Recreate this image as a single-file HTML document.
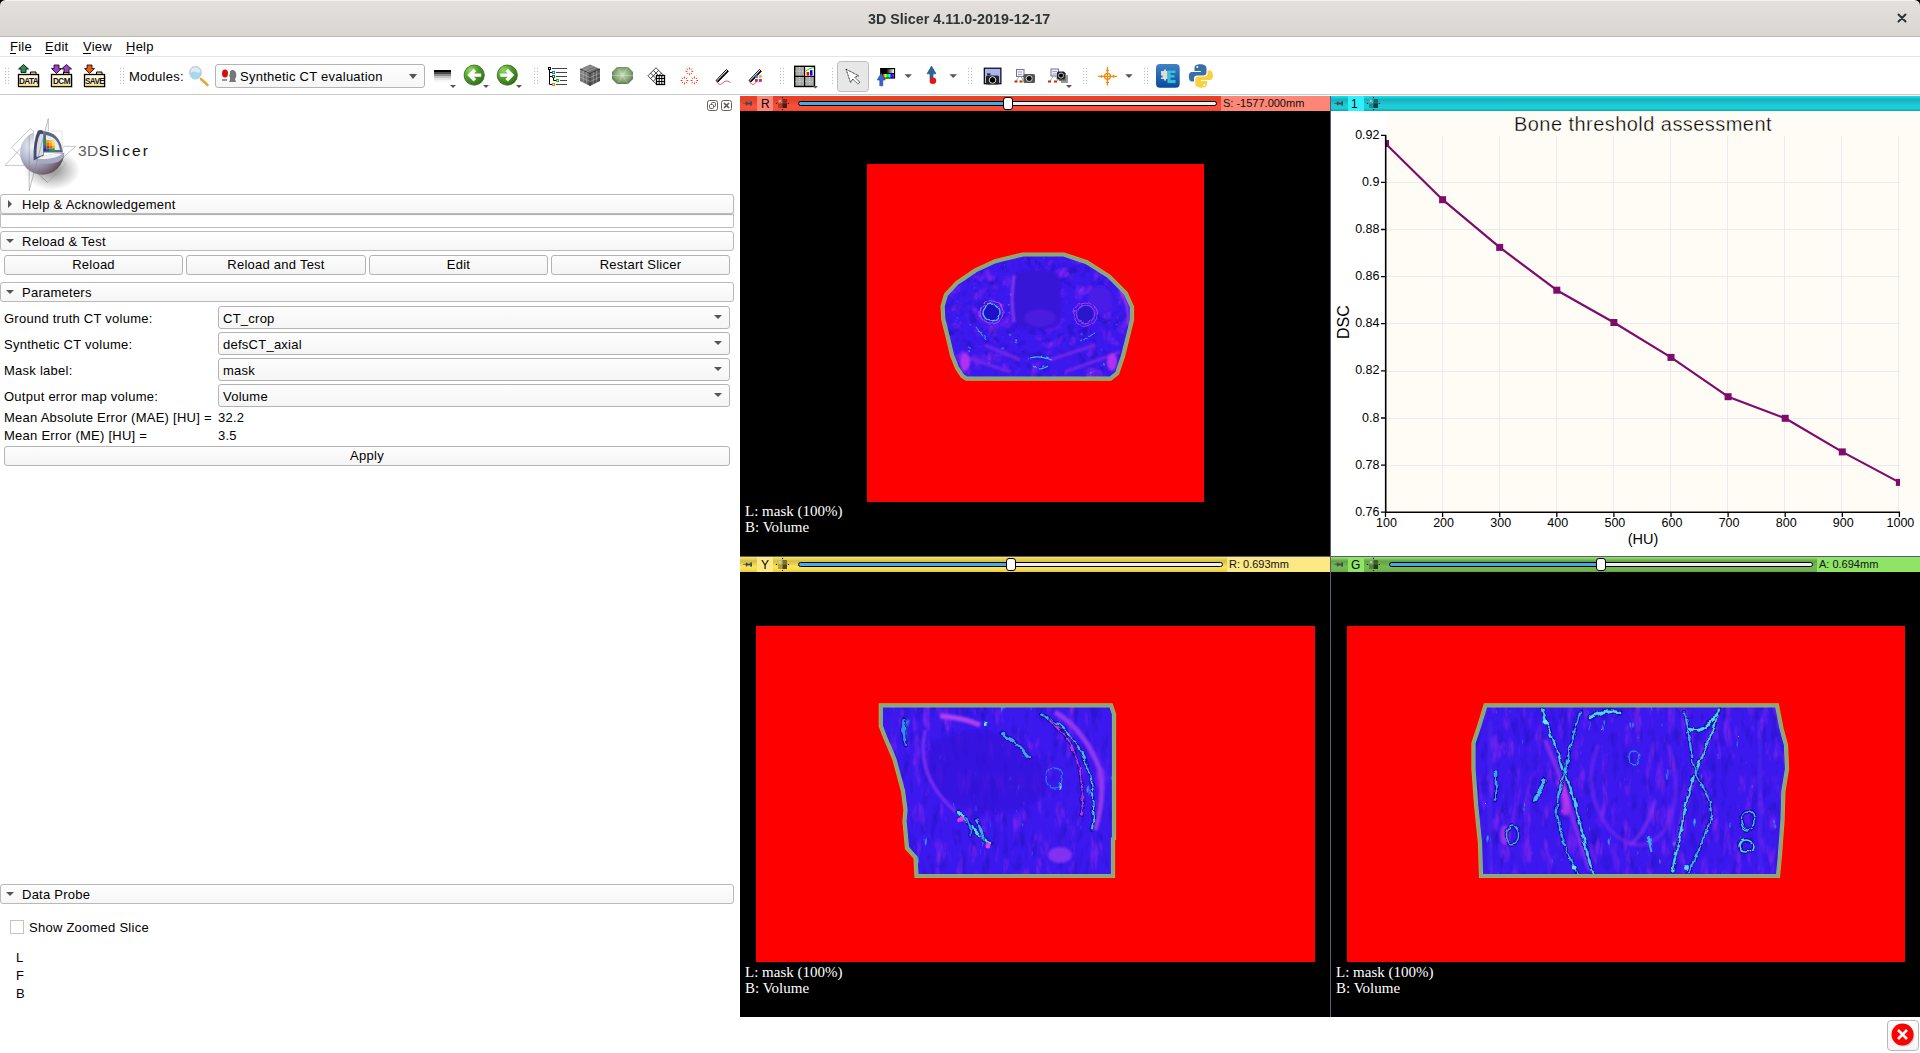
<!DOCTYPE html>
<html><head><meta charset="utf-8">
<style>
*{box-sizing:border-box;margin:0;padding:0}
html,body{width:1920px;height:1053px;overflow:hidden;background:#fff;font-family:"Liberation Sans",sans-serif;color:#000}
.a{position:absolute}
.t{position:absolute;white-space:pre;font-size:13px;letter-spacing:0.25px;line-height:15px}
#title{left:0;top:0;width:1920px;height:37px;background:linear-gradient(#e3e0dd,#d9d6d2);border-top:1px solid #f4f3f2;border-bottom:1px solid #bfb8b2}
.hdr{position:absolute;left:0;width:734px;height:20px;border:1px solid #b9b9b9;border-radius:3px;background:linear-gradient(#fefefe,#f6f6f6)}
.btn{position:absolute;height:20px;border:1px solid #b4b4b4;border-radius:3px;background:linear-gradient(#fdfdfd,#f4f4f4);text-align:center;font-size:13px;letter-spacing:0.25px;line-height:17px}
.combo{position:absolute;left:218px;width:512px;height:23px;border:1px solid #b4b4b4;border-radius:3px;background:linear-gradient(#fdfdfd,#f5f5f5)}
.tri{position:absolute;width:0;height:0;border-left:4px solid transparent;border-right:4px solid transparent;border-top:4px solid #555}
.grip{position:absolute;width:5px;height:17px;background-image:radial-gradient(circle,#c8c8c8 0.8px,transparent 1px);background-size:3px 3px}
.vtxt{position:absolute;white-space:pre;font-family:"Liberation Serif",serif;font-size:15px;color:#fff;line-height:16px}
</style></head><body>
<!-- TITLE BAR -->
<div id="title" class="a"></div>
<div class="t" style="left:868px;top:10px;font-size:15.5px;font-weight:700;letter-spacing:0;color:#2e3436;line-height:18px;transform:scaleX(0.924);transform-origin:0 0">3D Slicer 4.11.0-2019-12-17</div>
<svg class="a" style="left:1896px;top:12px" width="12" height="12" viewBox="0 0 12 12"><path d="M2.5 2.5L9.5 9.5M9.5 2.5L2.5 9.5" stroke="#2e3436" stroke-width="2" stroke-linecap="round"/></svg>
<svg class="a" style="left:0;top:0" width="6" height="6"><path d="M0 0H5.5A5.5 5.5 0 0 0 0 5.5Z" fill="#000"/></svg>
<svg class="a" style="left:1914px;top:0" width="6" height="6"><path d="M6 0H0.5A5.5 5.5 0 0 1 6 5.5Z" fill="#000"/></svg>

<!-- MENU -->
<div class="t" style="left:10px;top:39px">File</div>
<div class="t" style="left:45px;top:39px">Edit</div>
<div class="t" style="left:83px;top:39px">View</div>
<div class="t" style="left:126px;top:39px">Help</div>
<div class="a" style="left:10px;top:53px;width:6px;height:1px;background:#000"></div>
<div class="a" style="left:45px;top:53px;width:7px;height:1px;background:#000"></div>
<div class="a" style="left:83px;top:53px;width:8px;height:1px;background:#000"></div>
<div class="a" style="left:126px;top:53px;width:8px;height:1px;background:#000"></div>
<div class="a" style="left:0;top:56px;width:1920px;height:1px;background:#e4e4e4"></div>

<!-- TOOLBAR placeholder -->
<div id="toolbar">
<svg class="a" style="left:0;top:57px" width="1220" height="37" viewBox="0 57 1220 37">
<defs>
 <pattern id="gp" x="0" y="0" width="3" height="3" patternUnits="userSpaceOnUse"><circle cx="1" cy="1" r="0.75" fill="#b8b8b8"/></pattern>
 <linearGradient id="wl" x1="0" y1="0" x2="0" y2="1"><stop offset="0" stop-color="#000"/><stop offset="0.15" stop-color="#000"/><stop offset="0.2" stop-color="#555"/><stop offset="0.4" stop-color="#888"/><stop offset="0.6" stop-color="#ccc"/><stop offset="0.8" stop-color="#eee"/><stop offset="1" stop-color="#fafafa"/></linearGradient>
 <radialGradient id="gb" cx="0.3" cy="0.25" r="0.85"><stop offset="0" stop-color="#8fd85a"/><stop offset="0.5" stop-color="#4d9a2a"/><stop offset="1" stop-color="#2e6a16"/></radialGradient>
 <radialGradient id="oct" cx="0.5" cy="0.45" r="0.6"><stop offset="0" stop-color="#c8dcb8"/><stop offset="0.6" stop-color="#8aa878"/><stop offset="1" stop-color="#52704a"/></radialGradient>
 <linearGradient id="cube" x1="0" y1="0" x2="1" y2="1"><stop offset="0" stop-color="#9a9a9a"/><stop offset="1" stop-color="#3a3a3a"/></linearGradient>
 <linearGradient id="ext" x1="0" y1="0" x2="0" y2="1"><stop offset="0" stop-color="#3f82c6"/><stop offset="1" stop-color="#064b9e"/></linearGradient>
 <linearGradient id="rb" x1="0" y1="0" x2="1" y2="0"><stop offset="0" stop-color="#f00"/><stop offset="0.2" stop-color="#ff0"/><stop offset="0.4" stop-color="#0f0"/><stop offset="0.6" stop-color="#0ff"/><stop offset="0.8" stop-color="#00f"/><stop offset="1" stop-color="#f0f"/></linearGradient>
 <linearGradient id="gw" x1="0" y1="0" x2="1" y2="0"><stop offset="0" stop-color="#000"/><stop offset="0.3" stop-color="#000"/><stop offset="1" stop-color="#fff"/></linearGradient>
</defs>
<!-- grips -->
<rect x="5.0" y="67.8" width="1.1" height="1.1" fill="#bdbdbd"/><rect x="5.0" y="70.8" width="1.1" height="1.1" fill="#bdbdbd"/><rect x="5.0" y="73.8" width="1.1" height="1.1" fill="#bdbdbd"/><rect x="5.0" y="76.8" width="1.1" height="1.1" fill="#bdbdbd"/><rect x="5.0" y="79.8" width="1.1" height="1.1" fill="#bdbdbd"/><rect x="5.0" y="82.8" width="1.1" height="1.1" fill="#bdbdbd"/><rect x="8.0" y="67.8" width="1.1" height="1.1" fill="#bdbdbd"/><rect x="8.0" y="70.8" width="1.1" height="1.1" fill="#bdbdbd"/><rect x="8.0" y="73.8" width="1.1" height="1.1" fill="#bdbdbd"/><rect x="8.0" y="76.8" width="1.1" height="1.1" fill="#bdbdbd"/><rect x="8.0" y="79.8" width="1.1" height="1.1" fill="#bdbdbd"/><rect x="8.0" y="82.8" width="1.1" height="1.1" fill="#bdbdbd"/>
<rect x="120.0" y="67.8" width="1.1" height="1.1" fill="#bdbdbd"/><rect x="120.0" y="70.8" width="1.1" height="1.1" fill="#bdbdbd"/><rect x="120.0" y="73.8" width="1.1" height="1.1" fill="#bdbdbd"/><rect x="120.0" y="76.8" width="1.1" height="1.1" fill="#bdbdbd"/><rect x="120.0" y="79.8" width="1.1" height="1.1" fill="#bdbdbd"/><rect x="120.0" y="82.8" width="1.1" height="1.1" fill="#bdbdbd"/><rect x="123.0" y="67.8" width="1.1" height="1.1" fill="#bdbdbd"/><rect x="123.0" y="70.8" width="1.1" height="1.1" fill="#bdbdbd"/><rect x="123.0" y="73.8" width="1.1" height="1.1" fill="#bdbdbd"/><rect x="123.0" y="76.8" width="1.1" height="1.1" fill="#bdbdbd"/><rect x="123.0" y="79.8" width="1.1" height="1.1" fill="#bdbdbd"/><rect x="123.0" y="82.8" width="1.1" height="1.1" fill="#bdbdbd"/>
<rect x="534.0" y="67.8" width="1.1" height="1.1" fill="#bdbdbd"/><rect x="534.0" y="70.8" width="1.1" height="1.1" fill="#bdbdbd"/><rect x="534.0" y="73.8" width="1.1" height="1.1" fill="#bdbdbd"/><rect x="534.0" y="76.8" width="1.1" height="1.1" fill="#bdbdbd"/><rect x="534.0" y="79.8" width="1.1" height="1.1" fill="#bdbdbd"/><rect x="534.0" y="82.8" width="1.1" height="1.1" fill="#bdbdbd"/><rect x="537.0" y="67.8" width="1.1" height="1.1" fill="#bdbdbd"/><rect x="537.0" y="70.8" width="1.1" height="1.1" fill="#bdbdbd"/><rect x="537.0" y="73.8" width="1.1" height="1.1" fill="#bdbdbd"/><rect x="537.0" y="76.8" width="1.1" height="1.1" fill="#bdbdbd"/><rect x="537.0" y="79.8" width="1.1" height="1.1" fill="#bdbdbd"/><rect x="537.0" y="82.8" width="1.1" height="1.1" fill="#bdbdbd"/>
<rect x="780.0" y="67.8" width="1.1" height="1.1" fill="#bdbdbd"/><rect x="780.0" y="70.8" width="1.1" height="1.1" fill="#bdbdbd"/><rect x="780.0" y="73.8" width="1.1" height="1.1" fill="#bdbdbd"/><rect x="780.0" y="76.8" width="1.1" height="1.1" fill="#bdbdbd"/><rect x="780.0" y="79.8" width="1.1" height="1.1" fill="#bdbdbd"/><rect x="780.0" y="82.8" width="1.1" height="1.1" fill="#bdbdbd"/><rect x="783.0" y="67.8" width="1.1" height="1.1" fill="#bdbdbd"/><rect x="783.0" y="70.8" width="1.1" height="1.1" fill="#bdbdbd"/><rect x="783.0" y="73.8" width="1.1" height="1.1" fill="#bdbdbd"/><rect x="783.0" y="76.8" width="1.1" height="1.1" fill="#bdbdbd"/><rect x="783.0" y="79.8" width="1.1" height="1.1" fill="#bdbdbd"/><rect x="783.0" y="82.8" width="1.1" height="1.1" fill="#bdbdbd"/>
<rect x="832.0" y="67.8" width="1.1" height="1.1" fill="#bdbdbd"/><rect x="832.0" y="70.8" width="1.1" height="1.1" fill="#bdbdbd"/><rect x="832.0" y="73.8" width="1.1" height="1.1" fill="#bdbdbd"/><rect x="832.0" y="76.8" width="1.1" height="1.1" fill="#bdbdbd"/><rect x="832.0" y="79.8" width="1.1" height="1.1" fill="#bdbdbd"/><rect x="832.0" y="82.8" width="1.1" height="1.1" fill="#bdbdbd"/>
<rect x="968.0" y="67.8" width="1.1" height="1.1" fill="#bdbdbd"/><rect x="968.0" y="70.8" width="1.1" height="1.1" fill="#bdbdbd"/><rect x="968.0" y="73.8" width="1.1" height="1.1" fill="#bdbdbd"/><rect x="968.0" y="76.8" width="1.1" height="1.1" fill="#bdbdbd"/><rect x="968.0" y="79.8" width="1.1" height="1.1" fill="#bdbdbd"/><rect x="968.0" y="82.8" width="1.1" height="1.1" fill="#bdbdbd"/><rect x="971.0" y="67.8" width="1.1" height="1.1" fill="#bdbdbd"/><rect x="971.0" y="70.8" width="1.1" height="1.1" fill="#bdbdbd"/><rect x="971.0" y="73.8" width="1.1" height="1.1" fill="#bdbdbd"/><rect x="971.0" y="76.8" width="1.1" height="1.1" fill="#bdbdbd"/><rect x="971.0" y="79.8" width="1.1" height="1.1" fill="#bdbdbd"/><rect x="971.0" y="82.8" width="1.1" height="1.1" fill="#bdbdbd"/>
<rect x="1083.0" y="67.8" width="1.1" height="1.1" fill="#bdbdbd"/><rect x="1083.0" y="70.8" width="1.1" height="1.1" fill="#bdbdbd"/><rect x="1083.0" y="73.8" width="1.1" height="1.1" fill="#bdbdbd"/><rect x="1083.0" y="76.8" width="1.1" height="1.1" fill="#bdbdbd"/><rect x="1083.0" y="79.8" width="1.1" height="1.1" fill="#bdbdbd"/><rect x="1083.0" y="82.8" width="1.1" height="1.1" fill="#bdbdbd"/><rect x="1086.0" y="67.8" width="1.1" height="1.1" fill="#bdbdbd"/><rect x="1086.0" y="70.8" width="1.1" height="1.1" fill="#bdbdbd"/><rect x="1086.0" y="73.8" width="1.1" height="1.1" fill="#bdbdbd"/><rect x="1086.0" y="76.8" width="1.1" height="1.1" fill="#bdbdbd"/><rect x="1086.0" y="79.8" width="1.1" height="1.1" fill="#bdbdbd"/><rect x="1086.0" y="82.8" width="1.1" height="1.1" fill="#bdbdbd"/>
<rect x="1144.0" y="67.8" width="1.1" height="1.1" fill="#bdbdbd"/><rect x="1144.0" y="70.8" width="1.1" height="1.1" fill="#bdbdbd"/><rect x="1144.0" y="73.8" width="1.1" height="1.1" fill="#bdbdbd"/><rect x="1144.0" y="76.8" width="1.1" height="1.1" fill="#bdbdbd"/><rect x="1144.0" y="79.8" width="1.1" height="1.1" fill="#bdbdbd"/><rect x="1144.0" y="82.8" width="1.1" height="1.1" fill="#bdbdbd"/><rect x="1147.0" y="67.8" width="1.1" height="1.1" fill="#bdbdbd"/><rect x="1147.0" y="70.8" width="1.1" height="1.1" fill="#bdbdbd"/><rect x="1147.0" y="73.8" width="1.1" height="1.1" fill="#bdbdbd"/><rect x="1147.0" y="76.8" width="1.1" height="1.1" fill="#bdbdbd"/><rect x="1147.0" y="79.8" width="1.1" height="1.1" fill="#bdbdbd"/><rect x="1147.0" y="82.8" width="1.1" height="1.1" fill="#bdbdbd"/>

<!-- DATA -->
<g>
 <rect x="19" y="75" width="20" height="12" fill="#888" opacity="0.35" transform="translate(0.8 0.8)"/>
 <path d="M30.5 74.5V72H36V74.5" fill="#f3dc88" stroke="#000" stroke-width="1"/>
 <rect x="18.5" y="74.5" width="20" height="12" fill="#fff6d6" stroke="#000" stroke-width="1.3"/>
 <rect x="19.2" y="84.5" width="18.6" height="1.6" fill="#f0d670"/>
 <text x="28.5" y="84" font-family="Liberation Sans" font-weight="700" font-size="8.2" text-anchor="middle" letter-spacing="-0.6" fill="#111">DATA</text>
 <path d="M23.5 64.5L28.5 69H26V72.5H21V69H18.5Z" fill="#2f8a4c" stroke="#000" stroke-width="0.8"/>
</g>
<!-- DCM -->
<g>
 <rect x="52" y="75" width="20" height="12" fill="#888" opacity="0.35" transform="translate(0.8 0.8)"/>
 <path d="M63.5 74.5V72H69V74.5" fill="#f3dc88" stroke="#000" stroke-width="1"/>
 <rect x="51.5" y="74.5" width="20" height="12" fill="#fff6d6" stroke="#000" stroke-width="1.3"/>
 <rect x="52.2" y="84.5" width="18.6" height="1.6" fill="#f0d670"/>
 <text x="61.5" y="84" font-family="Liberation Sans" font-weight="700" font-size="8.2" text-anchor="middle" letter-spacing="-0.5" fill="#111">DCM</text>
 <path d="M56.5 73.5L61.5 68.5H59V65H54V68.5H51.5Z" fill="#a040c8" stroke="#000" stroke-width="0.8"/>
 <path d="M66.5 64.5L71.5 69H69V72.5H64V69H61.5Z" fill="#a040c8" stroke="#000" stroke-width="0.8"/>
</g>
<!-- SAVE -->
<g>
 <rect x="85" y="75" width="20" height="12" fill="#888" opacity="0.35" transform="translate(0.8 0.8)"/>
 <path d="M96.5 74.5V72H102V74.5" fill="#f3dc88" stroke="#000" stroke-width="1"/>
 <rect x="84.5" y="74.5" width="20" height="12" fill="#fff6d6" stroke="#000" stroke-width="1.3"/>
 <rect x="85.2" y="84.5" width="18.6" height="1.6" fill="#f0d670"/>
 <text x="94.5" y="84" font-family="Liberation Sans" font-weight="700" font-size="8.2" text-anchor="middle" letter-spacing="-0.7" fill="#111">SAVE</text>
 <path d="M89.5 73.5L94.5 68.5H92V65H87V68.5H84.5Z" fill="#f05a10" stroke="#000" stroke-width="0.8"/>
</g>
<!-- magnifier -->
<path d="M201 79L207.5 85" stroke="#e8a838" stroke-width="2.6" stroke-linecap="round"/>
<circle cx="195.5" cy="72.5" r="5.8" fill="#d8eff8" stroke="#c8c8c8" stroke-width="1.3"/>
<path d="M190.2 73 Q193 70.5 196 72 Q199 73.5 201 71.5 V74 A5.5 5.5 0 0 1 190 74Z" fill="#a8d8ea"/>
<!-- combo -->
<!-- W/L -->
<rect x="434" y="70" width="17" height="2" fill="#000"/><rect x="434" y="72" width="17" height="2" fill="#4a4a4a"/><rect x="434" y="74" width="17" height="2" fill="#8c8c8c"/><rect x="434" y="76" width="17" height="2" fill="#c4c4c4"/><rect x="434" y="78" width="17" height="2" fill="#e6e6e6"/><rect x="434" y="80" width="17" height="2" fill="#f6f6f6"/>
<path d="M450 85H456L453 88Z" fill="#555"/>
<!-- back / fwd -->
<circle cx="474.2" cy="75.1" r="10.1" fill="url(#gb)" stroke="#2d6a18" stroke-width="0.8"/>
<path d="M467.3 75.1L473.6 68.6L476.2 71.2L473.8 73.4H481.2V76.8H473.8L476.2 79L473.6 81.6Z" fill="#fff"/>
<path d="M483 85H489L486 88Z" fill="#555"/>
<circle cx="507.3" cy="75.1" r="10.1" fill="url(#gb)" stroke="#2d6a18" stroke-width="0.8"/>
<path d="M514.2 75.1L507.9 68.6L505.3 71.2L507.7 73.4H500.3V76.8H507.7L505.3 79L507.9 81.6Z" fill="#fff"/>
<path d="M516 85H522L519 88Z" fill="#555"/>
<!-- data tree -->
<g fill="none">
 <path d="M549.5 70V84.5H552M549.5 72.5H552M549.5 76.5H552M553.5 78V80.5H556" stroke="#000" stroke-width="1"/>
 <path d="M552 68.5H567M556 72.5H567M556 76.5H567M560 80.5H567M556 84.5H567" stroke="#444" stroke-width="1"/>
 <rect x="548.5" y="67.5" width="2" height="2" stroke="#000" stroke-width="1"/>
 <rect x="552.5" y="71.5" width="2" height="2" stroke="#1a6ee8" stroke-width="1"/>
 <rect x="552.5" y="75.5" width="2" height="2" stroke="#0a7a10" stroke-width="1"/>
 <rect x="556.5" y="79.5" width="2" height="2" stroke="#10c020" stroke-width="1"/>
 <rect x="552.5" y="83.5" width="2" height="2" stroke="#f07a10" stroke-width="1"/>
</g>
<!-- cube -->
<path d="M590 64.5L600 69V81L590 86L580 81V69Z" fill="url(#cube)"/>
<path d="M580 69L590 73.5L600 69M590 73.5V86" stroke="#2a2a2a" stroke-width="0.8" fill="none"/>
<path d="M583.3 70.5L593.3 66M586.6 72L596.6 67.5M580 73L590 77.5L600 73M580 77L590 81.5L600 77M583.3 71V83M586.6 72V84.5M593.3 72V84.5M596.6 70.5V83" stroke="#d0d0d0" stroke-width="0.6" fill="none" opacity="0.7"/>
<!-- octagon -->
<path d="M617 67H628L633 72V79L628 84H617L612 79V72Z" fill="url(#oct)"/>
<path d="M617 67L628 84M628 67L617 84M612 75.5H633" stroke="#f0f8e8" stroke-width="0.6" opacity="0.5"/>
<!-- grid icon -->
<g transform="rotate(45 656 75.8)" stroke="#000" stroke-width="0.7" fill="none">
 <rect x="650.3" y="70.1" width="11.4" height="11.4"/>
 <path d="M654.1 70.1V81.5M657.9 70.1V81.5M650.3 73.9H661.7M650.3 77.7H661.7"/>
</g>
<rect x="656.5" y="75.5" width="8" height="9" fill="#fff" stroke="#000" stroke-width="1.3"/>
<path d="M659.2 75.5V84.5M661.8 75.5V84.5M656.5 78.5H664.5M656.5 81.5H664.5" stroke="#000" stroke-width="1"/>
<!-- red dots -->
<g stroke="#f03010" stroke-width="1" fill="none">
 <path d="M689.4 67.5V69.3M689.4 73.3V75.1M685.6 71.3H687.4M691.4 71.3H693.2M686.7 68.6L687.8 69.7M691 72.9L692.1 74M692.1 68.6L691 69.7M687.8 72.9L686.7 74"/>
 <path d="M684.5 76.7V78.5M684.5 82.5V84.3M680.7 80.5H682.5M686.5 80.5H688.3M681.8 77.8L682.9 78.9M686.1 82.1L687.2 83.2M687.2 77.8L686.1 78.9M682.9 82.1L681.8 83.2"/>
 <path d="M694.4 76.7V78.5M694.4 82.5V84.3M690.6 80.5H692.4M696.4 80.5H698.2M691.7 77.8L692.8 78.9M696 82.1L697.1 83.2M697.1 77.8L696 78.9M692.8 82.1L691.7 83.2"/>
</g>
<!-- pen -->
<path d="M716 80.5L726.5 69.5L728.3 71.3L717.8 82Z" fill="#fff" stroke="#000" stroke-width="1"/>
<path d="M717.5 81.5L727.8 71" stroke="#000" stroke-width="1.4"/>
<path d="M716.5 81.5Q718.5 85 720.5 84.5Q723 83 724.5 81.5Q727 80 730.5 82.5" stroke="#e8406a" stroke-width="0.9" fill="none"/>
<!-- pen color -->
<path d="M749 80.5L759.5 69.5L761.3 71.3L750.8 82Z" fill="#fff" stroke="#000" stroke-width="1"/>
<path d="M750.5 81.5L760.8 71" stroke="#000" stroke-width="1.4"/>
<path d="M749.5 81.5Q751.5 85 753.5 84.5Q756 83 757 81" stroke="#e8406a" stroke-width="0.9" fill="none"/>
<rect x="755" y="75" width="2.8" height="2.8" fill="#1a78e8"/><rect x="759" y="75" width="2.8" height="2.8" fill="#f8b020"/>
<rect x="755" y="79" width="2.8" height="2.8" fill="#f02020"/><rect x="759" y="79" width="2.8" height="2.8" fill="#a020e0"/>
<!-- layout -->
<rect x="794.7" y="66.3" width="19.8" height="20.2" fill="#aaa" stroke="#000" stroke-width="1.4"/>
<path d="M804.6 66.3V86.5M794.7 76.4H814.5" stroke="#000" stroke-width="1.2"/>
<rect x="805.3" y="67" width="8.5" height="8.8" fill="#fff8e0"/>
<rect x="806.6" y="72" width="2.5" height="3.6" fill="#f00"/><rect x="810" y="70.2" width="2.5" height="5.4" fill="#00f"/>
<path d="M805.6 71Q809 68.5 813.6 67.5" stroke="#10e010" stroke-width="1" fill="none"/>
<path d="M795.5 71.3H803.8M799.6 67V75.6M795.5 81.4H803.8M799.6 77V85.8M805.3 81.4H813.8M809.6 77V85.8" stroke="#fff8d0" stroke-width="0.7" stroke-dasharray="0.8 1.4"/>
<path d="M813 86L818 86L815.5 88.5Z" fill="#555"/>
<!-- pointer button -->
<rect x="837.5" y="61.5" width="31" height="30" rx="3" fill="#e7e7e7" stroke="#bdbdbd" stroke-width="1"/>
<path d="M846 69.2L858.7 75.8L854.8 77.2L859.8 82.3L857.8 84L852.8 79L850.6 82.6Z" fill="#fff" stroke="#000" stroke-width="0.9" stroke-dasharray="1 0.6"/>
<!-- colorbar -->
<rect x="880.1" y="68" width="15" height="10.6" fill="#000"/>
<rect x="883" y="69.2" width="11" height="3.9" fill="url(#gw)"/>
<rect x="883" y="74" width="11" height="3.6" fill="url(#rb)"/>
<path d="M881.3 72.9L885.3 80H882.8V85.8H879.8V80H877.3Z" fill="#3a64c8" stroke="#2040a0" stroke-width="0.6"/>
<path d="M904.5 74.2H911.9L908.2 78Z" fill="#555"/>
<!-- fiducial -->
<path d="M931.5 66.1L936 73.8H933V79H930V73.8H927Z" fill="#2a6898" stroke="#184870" stroke-width="0.6"/>
<circle cx="932.9" cy="80.7" r="3.3" fill="#e01818"/>
<path d="M949.5 74.2H957L953.2 78Z" fill="#555"/>
<!-- screen capture -->
<rect x="984.3" y="68.2" width="16.6" height="15.5" fill="#aab4f0" stroke="#000" stroke-width="1.2"/>
<rect x="986" y="75.5" width="13" height="9" rx="1.5" fill="#222"/>
<rect x="987" y="73.3" width="3.5" height="2" fill="#333"/>
<circle cx="992.5" cy="80" r="3.3" fill="#000" stroke="#ddd" stroke-width="1"/>
<!-- scene cam 1 -->
<rect x="1016.5" y="69.5" width="7.5" height="7" fill="#f0f0ff" stroke="#777" stroke-width="1"/>
<path d="M1018 72H1022M1018 74.5H1022" stroke="#6060e0" stroke-width="0.6"/>
<path d="M1019 76.5L1016 81M1021 76.5L1023.5 81" stroke="#888" stroke-width="0.7"/>
<rect x="1014.5" y="80.5" width="3" height="2" fill="#c03000"/><rect x="1019.5" y="80.5" width="3" height="2" fill="#c03000"/>
<rect x="1023.5" y="74" width="11.5" height="9" rx="1.5" fill="#555"/>
<circle cx="1029.2" cy="78.5" r="3" fill="#111" stroke="#ccc" stroke-width="1"/>
<!-- scene cam 2 -->
<rect x="1051" y="69" width="7.5" height="7" fill="#f0f0ff" stroke="#777" stroke-width="1"/>
<path d="M1052.5 71.5H1057M1052.5 74H1057" stroke="#6060e0" stroke-width="0.6"/>
<path d="M1053.5 76L1050 81M1055.5 76L1058 81" stroke="#888" stroke-width="0.7"/>
<rect x="1048" y="80.5" width="3" height="2" fill="#c03000"/><rect x="1054" y="80.5" width="3" height="2" fill="#c03000"/>
<rect x="1061" y="75" width="7" height="8" fill="#999"/>
<rect x="1059" y="73" width="7" height="8" fill="#777"/>
<rect x="1057" y="71.5" width="8" height="8" rx="1.5" fill="#222"/>
<circle cx="1061" cy="75.5" r="2.5" fill="#000" stroke="#ccc" stroke-width="0.9"/>
<path d="M1066 85H1072L1069 88Z" fill="#555"/>
<!-- crosshair -->
<g stroke="#f08a10" stroke-width="1.3" fill="none">
 <path d="M1107.5 67V85.6M1098 76.3H1117"/>
 <circle cx="1107.5" cy="76.3" r="3"/>
 <path d="M1106 70.3H1109M1106 82.3H1109M1101.5 74.8V77.8M1113.5 74.8V77.8"/>
</g>
<path d="M1125.2 74.2H1132.7L1129 78Z" fill="#555"/>
<!-- extension -->
<rect x="1156" y="64.1" width="23.7" height="23.7" rx="4" fill="url(#ext)"/>
<path d="M1161 71H1164V69.5H1166V71H1168V79H1166V80.5H1164V79H1161V77.5H1162.5V75.5H1161Z" fill="#dcdcdc"/>
<path d="M1167.5 70.5H1175.5V73H1170.5V75H1174.5V77.5H1170.5V80H1175.5V83H1167.5Z" fill="#3cc0d8" stroke="#2a9ab8" stroke-width="0.4"/>
<!-- python -->
<path d="M1200.5 64.3C1195 64.3 1194.5 66.5 1194.5 68.5V71H1200.8V72H1192C1189.5 72 1188.8 74.5 1188.8 76.5C1188.8 79.5 1190 81.5 1192 81.5H1194V78.5C1194 76.8 1195.3 75.5 1197 75.5H1203.5C1205 75.5 1206.5 74.3 1206.5 72.5V68.5C1206.5 66.5 1205 64.3 1200.5 64.3Z" fill="#3a6ea8"/>
<circle cx="1197.3" cy="67" r="1" fill="#fff"/>
<path d="M1201.2 87.7C1206.7 87.7 1207.2 85.5 1207.2 83.5V81H1200.9V80H1209.7C1212.2 80 1212.9 77.5 1212.9 75.5C1212.9 72.5 1211.7 70.5 1209.7 70.5H1207.7V73.5C1207.7 75.2 1206.4 76.5 1204.7 76.5H1198.2C1196.7 76.5 1195.2 77.7 1195.2 79.5V83.5C1195.2 85.5 1196.7 87.7 1201.2 87.7Z" fill="#f8d040"/>
<circle cx="1204.4" cy="85" r="1" fill="#fff"/>
</svg>
<div class="t" style="left:129px;top:69px">Modules:</div>
<div class="a" style="left:215px;top:64px;width:210px;height:24px;border:1px solid #b4b4b4;border-radius:3px;background:linear-gradient(#fefefe,#f6f6f6)"></div>
<svg class="a" style="left:220px;top:68px" width="18" height="16" viewBox="0 0 18 16">
 <ellipse cx="5" cy="5.5" rx="3" ry="4" fill="#d01010"/>
 <path d="M2 12H7" stroke="#333" stroke-width="1"/>
 <path d="M13 2C10 2 9.5 4 10 6L9 8L10 9V12L9 14H16L15 11C17 9 17 3 13 2Z" fill="#777"/>
</svg>
<div class="t" style="left:240px;top:69px">Synthetic CT evaluation</div>
<div class="tri" style="left:409px;top:74px;border-width:5px 4.5px 0 4.5px"></div>
</div>
<div class="a" style="left:0;top:94px;width:1920px;height:1px;background:#c8c8c8"></div>

<!-- LEFT PANEL placeholder -->
<div id="left">
<!-- dock buttons -->
<svg class="a" style="left:704px;top:97px" width="32" height="17" viewBox="0 0 32 17">
 <rect x="3.5" y="3.5" width="10" height="10" rx="2" fill="none" stroke="#65615d" stroke-width="1"/>
 <rect x="7.5" y="5.5" width="4" height="4" rx="1" fill="#fff" stroke="#65615d" stroke-width="1"/>
 <rect x="5.5" y="7.5" width="4" height="4" rx="1" fill="#fff" stroke="#65615d" stroke-width="1"/>
 <rect x="17.5" y="3.5" width="10" height="10" rx="2" fill="none" stroke="#65615d" stroke-width="1"/>
 <path d="M20 6L25 11M25 6L20 11" stroke="#5f5b57" stroke-width="1.7"/>
</svg>
<!-- logo -->
<svg class="a" style="left:0;top:112px" width="80" height="82" viewBox="0 0 80 82">
 <defs>
  <radialGradient id="sph" cx="0.3" cy="0.35" r="0.85">
   <stop offset="0" stop-color="#f6f7fc"/><stop offset="0.4" stop-color="#b4b8d0"/><stop offset="0.75" stop-color="#7a6a7c"/><stop offset="1" stop-color="#4a2a30"/>
  </radialGradient>
  <radialGradient id="shd" cx="0.5" cy="0.5" r="0.5">
   <stop offset="0" stop-color="#000" stop-opacity="0.45"/><stop offset="1" stop-color="#000" stop-opacity="0"/>
  </radialGradient>
 </defs>
 <ellipse cx="52" cy="58" rx="28" ry="20" fill="url(#shd)"/>
 <path d="M11.7 35.4L30.4 16.4L65.8 52.2L47.5 70.5Z M5 53.4H44 M5 53.4L36 20 M75.9 34.3L42 64 M75.9 34.3H60" stroke="#9a9a9a" stroke-width="0.55" fill="none"/>
 <circle cx="42.1" cy="40.7" r="22" fill="url(#sph)"/>
 <path d="M34 48.5 L34 19 Q42 16 50 18 Q64 24 64.2 41 Q50 44 34 48.5Z" fill="#fff"/>
 <path d="M43.6 19.2 Q60 20 63 40.5 L43.6 40.5Z" fill="#5a6888"/>
 <path d="M46 23 Q58 25 60 38 L46 38Z" fill="#e8ecf0"/>
 <path d="M33.6 48.5 Q33 28 38 18.5 Q41 17.5 43.6 19 L43.6 45 Z" fill="#474c6c"/>
 <path d="M36.5 45 Q36 30 40 22 L43 22 L43 43Z" fill="#d8dce4"/>
 <path d="M34 48.5 Q50 40 64.3 41.5 Q64 47 58 50 Q46 54 34 48.5Z" fill="#a4aac0"/>
 <path d="M37 46.5 Q50 41 62 42 Q58 45 50 46.5 Q42 47.5 37 46.5Z" fill="#f2f2f6"/>
 <g>
  <rect x="43.6" y="28" width="2.8" height="2.8" fill="#1a9a3a"/><rect x="46.4" y="28" width="2.8" height="2.8" fill="#f0a010"/><rect x="49.2" y="28" width="2.8" height="2.8" fill="#f0c030"/><rect x="52" y="28" width="2.8" height="2.8" fill="#f8d880"/>
  <rect x="43.6" y="30.8" width="2.8" height="2.8" fill="#10a040"/><rect x="46.4" y="30.8" width="2.8" height="2.8" fill="#f06020"/><rect x="49.2" y="30.8" width="2.8" height="2.8" fill="#f0b010"/><rect x="52" y="30.8" width="2.8" height="2.8" fill="#f8d060"/>
  <rect x="43.6" y="33.6" width="2.8" height="2.8" fill="#1060d0"/><rect x="46.4" y="33.6" width="2.8" height="2.8" fill="#f02010"/><rect x="49.2" y="33.6" width="2.8" height="2.8" fill="#f06010"/><rect x="52" y="33.6" width="2.8" height="2.8" fill="#f0b010"/>
  <rect x="43.6" y="36.4" width="2.8" height="2.8" fill="#303840"/><rect x="46.4" y="36.4" width="2.8" height="2.8" fill="#1050c0"/><rect x="49.2" y="36.4" width="2.8" height="2.8" fill="#10a040"/><rect x="52" y="36.4" width="2.8" height="2.8" fill="#20a040"/>
 </g>
 <path d="M48.3 6.6L29.2 78.7 M48.3 6.6V19 M29.2 23.4V78.7 M47.5 70.5L29.2 53.4" stroke="#8a8a8a" stroke-width="0.55" fill="none"/>
 <path d="M50 19H62V38" stroke="#c8c8d0" stroke-width="0.5" fill="none"/>
</svg>
<div class="t" style="left:78px;top:142px;font-size:15.5px;letter-spacing:2.1px;color:#111;line-height:17px"><span style="color:#5c5c5c;letter-spacing:0.4px">3D</span>Slicer</div>

<!-- Help header -->
<div class="hdr" style="top:194px;height:20px;box-shadow:0 1px 1px #aaa"></div>
<div class="a" style="left:8px;top:200px;width:0;height:0;border-top:4px solid transparent;border-bottom:4px solid transparent;border-left:4px solid #555"></div>
<div class="t" style="left:22px;top:197px">Help &amp; Acknowledgement</div>
<div class="a" style="left:0;top:214px;width:734px;height:14px;border:1px solid #bdbdbd;border-top:none;border-radius:0 0 2px 2px"></div>

<!-- Reload & Test -->
<div class="hdr" style="top:231px"></div>
<div class="tri" style="left:6px;top:239px"></div>
<div class="t" style="left:22px;top:234px">Reload &amp; Test</div>
<div class="btn" style="left:4px;top:255px;width:179px">Reload</div>
<div class="btn" style="left:186px;top:255px;width:180px">Reload and Test</div>
<div class="btn" style="left:369px;top:255px;width:179px">Edit</div>
<div class="btn" style="left:551px;top:255px;width:179px">Restart Slicer</div>

<!-- Parameters -->
<div class="hdr" style="top:282px"></div>
<div class="tri" style="left:6px;top:290px"></div>
<div class="t" style="left:22px;top:285px">Parameters</div>

<div class="t" style="left:4px;top:311px">Ground truth CT volume:</div>
<div class="combo" style="top:306px"></div><div class="t" style="left:223px;top:311px">CT_crop</div><div class="tri" style="left:714px;top:315px"></div>
<div class="t" style="left:4px;top:337px">Synthetic CT volume:</div>
<div class="combo" style="top:332px"></div><div class="t" style="left:223px;top:337px">defsCT_axial</div><div class="tri" style="left:714px;top:341px"></div>
<div class="t" style="left:4px;top:363px">Mask label:</div>
<div class="combo" style="top:358px"></div><div class="t" style="left:223px;top:363px">mask</div><div class="tri" style="left:714px;top:367px"></div>
<div class="t" style="left:4px;top:389px">Output error map volume:</div>
<div class="combo" style="top:384px"></div><div class="t" style="left:223px;top:389px">Volume</div><div class="tri" style="left:714px;top:393px"></div>

<div class="t" style="left:4px;top:410px">Mean Absolute Error (MAE) [HU] =</div>
<div class="t" style="left:218px;top:410px">32.2</div>
<div class="t" style="left:4px;top:428px">Mean Error (ME) [HU] =</div>
<div class="t" style="left:218px;top:428px">3.5</div>
<div class="btn" style="left:4px;top:446px;width:726px">Apply</div>

<!-- Data Probe -->
<div class="hdr" style="top:884px"></div>
<div class="tri" style="left:6px;top:892px"></div>
<div class="t" style="left:22px;top:887px">Data Probe</div>
<div class="a" style="left:10px;top:920px;width:14px;height:14px;border:1px solid #c4c4c4;background:#fff"></div>
<div class="t" style="left:29px;top:920px">Show Zoomed Slice</div>
<div class="t" style="left:16px;top:950px">L</div>
<div class="t" style="left:16px;top:968px">F</div>
<div class="t" style="left:16px;top:986px">B</div>
</div>

<!-- VIEWS placeholder -->
<div id="views">
<div class="a" style="left:740px;top:111px;width:1180px;height:906px;background:#000"></div>
<!-- splitters -->
<div class="a" style="left:1330px;top:96px;width:1px;height:921px;background:#5d5a78"></div>
<div class="a" style="left:740px;top:556px;width:1180px;height:1px;background:#5d5a78"></div>

<!-- RED bar -->
<div class="a" style="left:740px;top:96px;width:590px;height:15px;background:linear-gradient(#f83b21 0%,#dd4530 28%,#e64832 42%,#ff4e38 65%,#fc4d37 85%,#e84630 100%)"></div>
<div class="a" style="left:757px;top:96px;width:16px;height:15px;background:#ff8674"></div>
<div class="t" style="left:761px;top:97px;font-size:12px;letter-spacing:0">R</div><svg class="a" style="left:740px;top:96px" width="50" height="15" viewBox="0 0 50 15">
 <path d="M3 7.4H6" stroke="#555" stroke-width="0.8"/><rect x="5.8" y="5.6" width="1.6" height="3.8" rx="0.6" fill="#3c4a50"/><rect x="7" y="6.6" width="3.6" height="1.8" fill="#3c4a50"/><rect x="10.2" y="5.3" width="1.8" height="4.4" rx="0.7" fill="#3c4a50"/>
 <rect x="38" y="3" width="9" height="9" fill="#000" opacity="0.18"/>
 <rect x="38" y="3" width="4.5" height="4.5" fill="#fff" opacity="0.22"/>
 <rect x="42.5" y="3" width="4.5" height="4.5" fill="#000" opacity="0.3"/>
 <rect x="38" y="7.5" width="4.5" height="4.5" fill="#000" opacity="0.12"/>
 <rect x="42.5" y="7.5" width="4.5" height="4.5" fill="#000" opacity="0.62"/>
 <circle cx="40" cy="5" r="1" fill="#fff" opacity="0.5"/>
 <circle cx="42.5" cy="1.5" r="0.7" fill="#111"/><circle cx="42.5" cy="13.6" r="0.7" fill="#111"/><circle cx="36.5" cy="7.4" r="0.7" fill="#111"/><circle cx="48.4" cy="7.4" r="0.7" fill="#111"/>
</svg>
<div class="a" style="left:798px;top:101px;width:419px;height:5px;border:1px solid #000;border-radius:3px;background:linear-gradient(90deg,#45aaea 0,#45aaea 205px,#eee 205px)"></div>
<div class="a" style="left:1003px;top:97px;width:10px;height:13px;border:1px solid #000;border-radius:3px;background:#fff"></div>
<div class="a" style="left:1221px;top:96px;width:109px;height:15px;background:#fd8676"></div>
<div class="t" style="left:1223px;top:97px;font-size:11px;letter-spacing:0;line-height:13px;color:#111">S: -1577.000mm</div>

<!-- red view image -->
<div class="a" style="left:867px;top:164px;width:337px;height:338px;background:#f00"></div>
<svg class="a" style="left:930px;top:240px" width="220" height="150" viewBox="930 240 220 150">
 <defs>
  <filter id="tx" x="0" y="0" width="100%" height="100%" color-interpolation-filters="sRGB">
 <feTurbulence type="turbulence" baseFrequency="0.09 0.03" numOctaves="3" seed="3" result="n"/>
 <feColorMatrix in="n" type="matrix" values="0 0 0 0 0.58  0 0 0 0 0.16  0 0 0 0 0.95  1.5 0 0 0 -0.5" result="m"/>
 <feTurbulence type="turbulence" baseFrequency="0.1 0.04" numOctaves="2" seed="11" result="n2"/>
 <feColorMatrix in="n2" type="matrix" values="0 0 0 0 0.12  0 0 0 0 0.06  0 0 0 0 0.7  0 1.2 0 0 -0.35" result="d"/>
 <feTurbulence type="turbulence" baseFrequency="0.14 0.06" numOctaves="2" seed="21" result="n3"/>
 <feColorMatrix in="n3" type="matrix" values="0 0 0 0 0.25  0 0 0 0 0.75  0 0 0 0 0.97  0 0 3.5 0 -2.1" result="c"/>
 <feMerge><feMergeNode in="d"/><feMergeNode in="m"/><feMergeNode in="c"/></feMerge>
</filter>
  <filter id="tx2" x="0" y="0" width="100%" height="100%" color-interpolation-filters="sRGB">
 <feTurbulence type="turbulence" baseFrequency="0.07 0.06" numOctaves="3" seed="5" result="n"/>
 <feColorMatrix in="n" type="matrix" values="0 0 0 0 0.58  0 0 0 0 0.16  0 0 0 0 0.95  1.6 0 0 0 -0.5" result="m"/>
 <feTurbulence type="turbulence" baseFrequency="0.09 0.08" numOctaves="2" seed="13" result="n2"/>
 <feColorMatrix in="n2" type="matrix" values="0 0 0 0 0.12  0 0 0 0 0.06  0 0 0 0 0.7  0 1.4 0 0 -0.38" result="d"/>
 <feTurbulence type="turbulence" baseFrequency="0.15 0.13" numOctaves="2" seed="23" result="n3"/>
 <feColorMatrix in="n3" type="matrix" values="0 0 0 0 0.25  0 0 0 0 0.75  0 0 0 0 0.97  0 0 3.5 0 -2.15" result="c"/>
 <feMerge><feMergeNode in="d"/><feMergeNode in="m"/><feMergeNode in="c"/></feMerge>
</filter>
  <filter id="bl1" x="-20%" y="-20%" width="140%" height="140%"><feGaussianBlur stdDeviation="1.2"/></filter>
  <filter id="bl2" x="-10%" y="-10%" width="120%" height="120%"><feTurbulence type="fractalNoise" baseFrequency="0.15" numOctaves="2" seed="4" result="w"/><feDisplacementMap in="SourceGraphic" in2="w" scale="3.5" xChannelSelector="R" yChannelSelector="G" result="dm"/><feGaussianBlur in="dm" stdDeviation="0.5"/></filter>
  <clipPath id="c1"><path d="M1022.8 254.5 L1063.9 254.5 L1086.7 262.2 L1109.0 276.3 L1125.8 293.2 L1132.0 307.0 L1132.0 319.8 L1127.8 336.9 L1122.8 356.8 L1117.2 373.2 L1110.4 378.6 L966.5 378.6 L962.4 375.9 L957.2 368.2 L952.0 355.2 L948.0 338.0 L943.3 319.5 L942.6 306.2 L946.0 294.6 L957.0 282.9 L975.4 270.4 L995.2 261.2Z"/></clipPath>
 </defs>
 <path d="M1022.8 254.5 L1063.9 254.5 L1086.7 262.2 L1109.0 276.3 L1125.8 293.2 L1132.0 307.0 L1132.0 319.8 L1127.8 336.9 L1122.8 356.8 L1117.2 373.2 L1110.4 378.6 L966.5 378.6 L962.4 375.9 L957.2 368.2 L952.0 355.2 L948.0 338.0 L943.3 319.5 L942.6 306.2 L946.0 294.6 L957.0 282.9 L975.4 270.4 L995.2 261.2Z" fill="#3a18ee"/>
 <g clip-path="url(#c1)">
  <rect x="930" y="240" width="220" height="150" filter="url(#tx2)"/>
  <g filter="url(#bl1)">
   <path d="M1022 271 Q1037 268 1052 271 Q1061 274 1061 288 L1061 316 Q1060 329 1046 329 L1027 329 Q1012 329 1012 316 L1012 288 Q1012 273 1022 271Z" fill="#3812d8"/><ellipse cx="1040" cy="318" rx="16" ry="9" fill="#4a1ae0"/>
   <path d="M1014 275 Q1010 300 1014 322" stroke="#8a3af0" stroke-width="2.5" fill="none"/>
   <path d="M960 355 L1010 372 M1065 372 L1120 352 M985 345 L1020 360 M1050 360 L1095 345" stroke="#7428e8" stroke-width="3" fill="none"/>
   <ellipse cx="965" cy="362" rx="5" ry="9" fill="#b030f0"/>
   <ellipse cx="1112" cy="362" rx="5" ry="9" fill="#b030f0"/>
   <ellipse cx="1100" cy="300" rx="12" ry="14" fill="#4a1ae8"/>
   <path d="M1120 290 Q1130 305 1128 325" stroke="#a038f0" stroke-width="2.5" fill="none"/>
  </g>
  <g filter="url(#bl2)">
   <circle cx="991.5" cy="312.5" r="8.5" fill="#2410c8" stroke="#40c0f0" stroke-width="1.4"/>
   <circle cx="991.5" cy="312.5" r="11.5" fill="none" stroke="#c040f0" stroke-width="1.1"/>
   <circle cx="1085.5" cy="314" r="9" fill="#2a12cc" stroke="#8040f0" stroke-width="1.3"/>
   <circle cx="1085.5" cy="314" r="12" fill="none" stroke="#b038f0" stroke-width="1"/>
   <path d="M1030 358 Q1040 355 1052 360 M1033 366 Q1040 372 1048 366" stroke="#40b8f0" stroke-width="1.1" fill="none"/>
   <path d="M976 327 L986 340 M1095 333 L1080 342" stroke="#30a8f0" stroke-width="1" fill="none"/>
  </g>
 </g>
 <path d="M1022.8 254.5 L1063.9 254.5 L1086.7 262.2 L1109.0 276.3 L1125.8 293.2 L1132.0 307.0 L1132.0 319.8 L1127.8 336.9 L1122.8 356.8 L1117.2 373.2 L1110.4 378.6 L966.5 378.6 L962.4 375.9 L957.2 368.2 L952.0 355.2 L948.0 338.0 L943.3 319.5 L942.6 306.2 L946.0 294.6 L957.0 282.9 L975.4 270.4 L995.2 261.2Z" fill="none" stroke="#a8d860" stroke-width="4.2" opacity="0.8"/>
 <path d="M1022.8 254.5 L1063.9 254.5 L1086.7 262.2 L1109.0 276.3 L1125.8 293.2 L1132.0 307.0 L1132.0 319.8 L1127.8 336.9 L1122.8 356.8 L1117.2 373.2 L1110.4 378.6 L966.5 378.6 L962.4 375.9 L957.2 368.2 L952.0 355.2 L948.0 338.0 L943.3 319.5 L942.6 306.2 L946.0 294.6 L957.0 282.9 L975.4 270.4 L995.2 261.2Z" fill="none" stroke="#86a87c" stroke-width="2.8"/>
</svg>
<div class="vtxt" style="left:745px;top:503px">L: mask (100%)<br>B: Volume</div>

<!-- CHART (view 1) -->
<div class="a" style="left:1331px;top:96px;width:589px;height:460px;background:#fff"></div>
<div class="a" style="left:1331px;top:96px;width:589px;height:15px;background:linear-gradient(#12e6f0 0%,#19aeb9 25%,#1ccdd8 60%,#1ccdd8 86%,#0aa6b2 95%,#1cb8c4 100%)"></div>
<div class="a" style="left:1348px;top:96px;width:16px;height:15px;background:#2ff0fc"></div>
<div class="t" style="left:1351px;top:97px;font-size:12px;letter-spacing:0">1</div><svg class="a" style="left:1331px;top:96px" width="50" height="15" viewBox="0 0 50 15">
 <path d="M3 7.4H6" stroke="#555" stroke-width="0.8"/><rect x="5.8" y="5.6" width="1.6" height="3.8" rx="0.6" fill="#3c4a50"/><rect x="7" y="6.6" width="3.6" height="1.8" fill="#3c4a50"/><rect x="10.2" y="5.3" width="1.8" height="4.4" rx="0.7" fill="#3c4a50"/>
 <rect x="38" y="3" width="9" height="9" fill="#000" opacity="0.18"/>
 <rect x="38" y="3" width="4.5" height="4.5" fill="#fff" opacity="0.22"/>
 <rect x="42.5" y="3" width="4.5" height="4.5" fill="#000" opacity="0.3"/>
 <rect x="38" y="7.5" width="4.5" height="4.5" fill="#000" opacity="0.12"/>
 <rect x="42.5" y="7.5" width="4.5" height="4.5" fill="#000" opacity="0.62"/>
 <circle cx="40" cy="5" r="1" fill="#fff" opacity="0.5"/>
 <circle cx="42.5" cy="1.5" r="0.7" fill="#111"/><circle cx="42.5" cy="13.6" r="0.7" fill="#111"/><circle cx="36.5" cy="7.4" r="0.7" fill="#111"/><circle cx="48.4" cy="7.4" r="0.7" fill="#111"/>
</svg>
<div id="chart">
<svg class="a" style="left:1331px;top:111px" width="589" height="445" viewBox="1331 111 589 445">
<defs><clipPath id="pc"><rect x="1386" y="111" width="514" height="401"/></clipPath></defs>
<rect x="1386" y="111" width="534" height="401" fill="#fffcf5"/>
<path d="M1442.5 136V512 M1499.5 136V512 M1556.5 136V512 M1613.5 136V512 M1670.5 136V512 M1727.5 136V512 M1784.5 136V512 M1841.5 136V512 M1898.5 136V512 M1386 182.5H1900 M1386 229.5H1900 M1386 276.5H1900 M1386 323.5H1900 M1386 371.5H1900 M1386 418.5H1900 M1386 465.5H1900" stroke="#ebebef" stroke-width="1" fill="none"/>
<g clip-path="url(#pc)">
<path d="M1385.5 143.5 L1442.6 199.7 L1499.7 247.4 L1556.8 290.2 L1613.9 322.5 L1671.0 357.4 L1728.1 396.7 L1785.2 418.3 L1842.3 451.9 L1899.4 482.4" stroke="#7d0c6c" stroke-width="2.2" fill="none" stroke-linejoin="round"/>
<rect x="1382.0" y="140.0" width="7" height="7" fill="#7d0c6c"/>
<rect x="1439.1" y="196.2" width="7" height="7" fill="#7d0c6c"/>
<rect x="1496.2" y="243.9" width="7" height="7" fill="#7d0c6c"/>
<rect x="1553.3" y="286.7" width="7" height="7" fill="#7d0c6c"/>
<rect x="1610.4" y="319.0" width="7" height="7" fill="#7d0c6c"/>
<rect x="1667.5" y="353.9" width="7" height="7" fill="#7d0c6c"/>
<rect x="1724.6" y="393.2" width="7" height="7" fill="#7d0c6c"/>
<rect x="1781.7" y="414.8" width="7" height="7" fill="#7d0c6c"/>
<rect x="1838.8" y="448.4" width="7" height="7" fill="#7d0c6c"/>
<rect x="1895.9" y="478.9" width="7" height="7" fill="#7d0c6c"/>
</g>
<path d="M1385.7 135V513M1385 512.3H1900" stroke="#000" stroke-width="1.6" fill="none"/>
<path d="M1381 135.3H1386 M1381 182.4H1386 M1381 229.5H1386 M1381 276.6H1386 M1381 323.7H1386 M1381 370.8H1386 M1381 418.0H1386 M1381 465.1H1386 M1381 512.2H1386 M1385.5 512V517 M1442.6 512V517 M1499.7 512V517 M1556.8 512V517 M1613.9 512V517 M1671.0 512V517 M1728.1 512V517 M1785.2 512V517 M1842.3 512V517 M1899.4 512V517" stroke="#000" stroke-width="1.3" fill="none"/>
<text x="1379.5" y="138.9" text-anchor="end" font-size="12.5" font-family="Liberation Sans">0.92</text>
<text x="1379.5" y="186.0" text-anchor="end" font-size="12.5" font-family="Liberation Sans">0.9</text>
<text x="1379.5" y="233.1" text-anchor="end" font-size="12.5" font-family="Liberation Sans">0.88</text>
<text x="1379.5" y="280.2" text-anchor="end" font-size="12.5" font-family="Liberation Sans">0.86</text>
<text x="1379.5" y="327.3" text-anchor="end" font-size="12.5" font-family="Liberation Sans">0.84</text>
<text x="1379.5" y="374.4" text-anchor="end" font-size="12.5" font-family="Liberation Sans">0.82</text>
<text x="1379.5" y="421.6" text-anchor="end" font-size="12.5" font-family="Liberation Sans">0.8</text>
<text x="1379.5" y="468.7" text-anchor="end" font-size="12.5" font-family="Liberation Sans">0.78</text>
<text x="1379.5" y="515.8" text-anchor="end" font-size="12.5" font-family="Liberation Sans">0.76</text>
<text x="1386.5" y="527.3" text-anchor="middle" font-size="12.5" font-family="Liberation Sans">100</text>
<text x="1443.6" y="527.3" text-anchor="middle" font-size="12.5" font-family="Liberation Sans">200</text>
<text x="1500.7" y="527.3" text-anchor="middle" font-size="12.5" font-family="Liberation Sans">300</text>
<text x="1557.8" y="527.3" text-anchor="middle" font-size="12.5" font-family="Liberation Sans">400</text>
<text x="1614.9" y="527.3" text-anchor="middle" font-size="12.5" font-family="Liberation Sans">500</text>
<text x="1672.0" y="527.3" text-anchor="middle" font-size="12.5" font-family="Liberation Sans">600</text>
<text x="1729.1" y="527.3" text-anchor="middle" font-size="12.5" font-family="Liberation Sans">700</text>
<text x="1786.2" y="527.3" text-anchor="middle" font-size="12.5" font-family="Liberation Sans">800</text>
<text x="1843.3" y="527.3" text-anchor="middle" font-size="12.5" font-family="Liberation Sans">900</text>
<text x="1900.4" y="527.3" text-anchor="middle" font-size="12.5" font-family="Liberation Sans">1000</text>
<text x="1643" y="543.5" text-anchor="middle" font-size="14.5" font-family="Liberation Sans">(HU)</text>
<text transform="translate(1349 322.2) rotate(-90)" text-anchor="middle" font-size="16" font-family="Liberation Sans">DSC</text>
<text x="1643" y="130.5" text-anchor="middle" font-size="20" letter-spacing="0.45" font-family="Liberation Sans" fill="#000" stroke="#fffcf5" stroke-width="0.35">Bone threshold assessment</text>
</svg>
</div>

<!-- YELLOW bar -->
<div class="a" style="left:740px;top:557px;width:590px;height:15px;background:linear-gradient(#fde550 0%,#d4bc4c 28%,#e2cc50 42%,#fee352 65%,#f4da50 85%,#e0c84c 100%)"></div>
<div class="a" style="left:757px;top:557px;width:16px;height:15px;background:#fde886"></div>
<div class="t" style="left:761px;top:558px;font-size:12px;letter-spacing:0">Y</div><svg class="a" style="left:740px;top:557px" width="50" height="15" viewBox="0 0 50 15">
 <path d="M3 7.4H6" stroke="#555" stroke-width="0.8"/><rect x="5.8" y="5.6" width="1.6" height="3.8" rx="0.6" fill="#3c4a50"/><rect x="7" y="6.6" width="3.6" height="1.8" fill="#3c4a50"/><rect x="10.2" y="5.3" width="1.8" height="4.4" rx="0.7" fill="#3c4a50"/>
 <rect x="38" y="3" width="9" height="9" fill="#000" opacity="0.18"/>
 <rect x="38" y="3" width="4.5" height="4.5" fill="#fff" opacity="0.22"/>
 <rect x="42.5" y="3" width="4.5" height="4.5" fill="#000" opacity="0.3"/>
 <rect x="38" y="7.5" width="4.5" height="4.5" fill="#000" opacity="0.12"/>
 <rect x="42.5" y="7.5" width="4.5" height="4.5" fill="#000" opacity="0.62"/>
 <circle cx="40" cy="5" r="1" fill="#fff" opacity="0.5"/>
 <circle cx="42.5" cy="1.5" r="0.7" fill="#111"/><circle cx="42.5" cy="13.6" r="0.7" fill="#111"/><circle cx="36.5" cy="7.4" r="0.7" fill="#111"/><circle cx="48.4" cy="7.4" r="0.7" fill="#111"/>
</svg>
<div class="a" style="left:798px;top:562px;width:425px;height:5px;border:1px solid #000;border-radius:3px;background:linear-gradient(90deg,#45aaea 0,#45aaea 208px,#eee 208px)"></div>
<div class="a" style="left:1006px;top:558px;width:10px;height:13px;border:1px solid #000;border-radius:3px;background:#fff"></div>
<div class="a" style="left:1227px;top:557px;width:103px;height:15px;background:#fde886"></div>
<div class="t" style="left:1229px;top:558px;font-size:11px;letter-spacing:0;line-height:13px;color:#111">R: 0.693mm</div>
<div class="a" style="left:756px;top:626px;width:559px;height:336px;background:#f00"></div>
<svg class="a" style="left:870px;top:695px" width="255" height="195" viewBox="870 695 255 195">
 <defs><clipPath id="c2"><path d="M880.8 705.4 L1111 705.4 L1114 714 L1114 838.5 L1113 839 L1113 876 L916.5 876 L915.5 857.5 L907 848 L904.5 821 L905.5 810 L903 791 L894.5 759.5 L885 737 L880.8 726Z"/></clipPath>
 <filter id="bl3" x="-20%" y="-20%" width="140%" height="140%"><feGaussianBlur stdDeviation="1.3"/></filter>
 <filter id="bl4" x="-10%" y="-10%" width="120%" height="120%"><feTurbulence type="fractalNoise" baseFrequency="0.12" numOctaves="2" seed="9" result="w"/><feDisplacementMap in="SourceGraphic" in2="w" scale="5" xChannelSelector="R" yChannelSelector="G" result="dm"/><feGaussianBlur in="dm" stdDeviation="0.6"/></filter></defs>
 <path d="M880.8 705.4 L1111 705.4 L1114 714 L1114 838.5 L1113 839 L1113 876 L916.5 876 L915.5 857.5 L907 848 L904.5 821 L905.5 810 L903 791 L894.5 759.5 L885 737 L880.8 726Z" fill="#3a18ee"/>
 <g clip-path="url(#c2)">
  <rect x="870" y="695" width="255" height="195" filter="url(#tx)"/>
  <g filter="url(#bl3)">
   <ellipse cx="985" cy="772" rx="62" ry="40" transform="rotate(12 985 772)" fill="#3412dc" opacity="0.7"/>
   <path d="M925 730 Q915 780 960 815" stroke="#7a2ef0" stroke-width="3" fill="none"/>
   <path d="M940 716 Q965 718 980 725" stroke="#b040f0" stroke-width="5" fill="none"/>
   <path d="M1055 712 Q1085 730 1100 770 Q1105 800 1095 830" stroke="#9038f0" stroke-width="5" fill="none"/>
   <ellipse cx="1060" cy="855" rx="12" ry="8" fill="#8030f0"/>
   <path d="M908 720 Q903 730 905 740" stroke="#3090f0" stroke-width="3" fill="none"/>
  </g>
  <g filter="url(#bl4)">
   <path d="M958 812 Q968 822 975 830 Q982 838 990 844" stroke="#10068a" stroke-width="5.0" fill="none" opacity="0.7" stroke-linecap="round"/><path d="M958 812 Q968 822 975 830 Q982 838 990 844" stroke="#48e4f8" stroke-width="2.4" fill="none" stroke-linecap="round"/><path d="M958 812 Q968 822 975 830 Q982 838 990 844" stroke="#48e4f8" stroke-width="3.6" fill="none" stroke-dasharray="4 3 7 5 2 4" opacity="0.75"/><path d="M966 818 Q972 826 970 836" stroke="#10068a" stroke-width="4.0" fill="none" opacity="0.7" stroke-linecap="round"/><path d="M966 818 Q972 826 970 836" stroke="#3890f0" stroke-width="1.4" fill="none" stroke-linecap="round"/><path d="M966 818 Q972 826 970 836" stroke="#3890f0" stroke-width="2.6" fill="none" stroke-dasharray="4 3 7 5 2 4" opacity="0.75"/><path d="M976 820 Q982 828 984 840" stroke="#10068a" stroke-width="4.0" fill="none" opacity="0.7" stroke-linecap="round"/><path d="M976 820 Q982 828 984 840" stroke="#40b0f0" stroke-width="1.4" fill="none" stroke-linecap="round"/><path d="M976 820 Q982 828 984 840" stroke="#40b0f0" stroke-width="2.6" fill="none" stroke-dasharray="4 3 7 5 2 4" opacity="0.75"/><circle cx="961" cy="820" r="2.8" fill="#d838f0"/><circle cx="988" cy="846" r="2.5" fill="#e040f0"/><ellipse cx="986" cy="724" rx="1.8" ry="2.2" fill="#50f0c8"/><ellipse cx="1060" cy="786" rx="1.6" ry="3.8" fill="#58ecf0"/><path d="M1040 714 Q1060 722 1072 738 Q1085 755 1090 775 Q1096 800 1092 830" stroke="#10068a" stroke-width="3.8" fill="none" opacity="0.7" stroke-linecap="round"/><path d="M1040 714 Q1060 722 1072 738 Q1085 755 1090 775 Q1096 800 1092 830" stroke="#40c8f0" stroke-width="1.2" fill="none" stroke-linecap="round"/><path d="M1040 714 Q1060 722 1072 738 Q1085 755 1090 775 Q1096 800 1092 830" stroke="#40c8f0" stroke-width="2.4" fill="none" stroke-dasharray="4 3 7 5 2 4" opacity="0.75"/><path d="M1050 720 Q1068 735 1078 760 Q1084 790 1082 815" stroke="#10068a" stroke-width="3.6" fill="none" opacity="0.7" stroke-linecap="round"/><path d="M1050 720 Q1068 735 1078 760 Q1084 790 1082 815" stroke="#c040f0" stroke-width="1.0" fill="none" stroke-linecap="round"/><path d="M1050 720 Q1068 735 1078 760 Q1084 790 1082 815" stroke="#c040f0" stroke-width="2.2" fill="none" stroke-dasharray="4 3 7 5 2 4" opacity="0.75"/><path d="M1002 733 Q1018 745 1030 757" stroke="#10068a" stroke-width="4.800000000000001" fill="none" opacity="0.7" stroke-linecap="round"/><path d="M1002 733 Q1018 745 1030 757" stroke="#40a8f0" stroke-width="2.2" fill="none" stroke-linecap="round"/><path d="M1002 733 Q1018 745 1030 757" stroke="#40a8f0" stroke-width="3.4" fill="none" stroke-dasharray="4 3 7 5 2 4" opacity="0.75"/><path d="M905 720 Q902 732 906 745" stroke="#10068a" stroke-width="4.800000000000001" fill="none" opacity="0.7" stroke-linecap="round"/><path d="M905 720 Q902 732 906 745" stroke="#3090f0" stroke-width="2.2" fill="none" stroke-linecap="round"/><path d="M905 720 Q902 732 906 745" stroke="#3090f0" stroke-width="3.4" fill="none" stroke-dasharray="4 3 7 5 2 4" opacity="0.75"/><ellipse cx="1054" cy="778" rx="8" ry="10" fill="none" stroke="#3070f0" stroke-width="1.3"/>
  </g>
 </g>
 <path d="M880.8 705.4 L1111 705.4 L1114 714 L1114 838.5 L1113 839 L1113 876 L916.5 876 L915.5 857.5 L907 848 L904.5 821 L905.5 810 L903 791 L894.5 759.5 L885 737 L880.8 726Z" fill="none" stroke="#a8d860" stroke-width="4.2" opacity="0.8"/>
 <path d="M880.8 705.4 L1111 705.4 L1114 714 L1114 838.5 L1113 839 L1113 876 L916.5 876 L915.5 857.5 L907 848 L904.5 821 L905.5 810 L903 791 L894.5 759.5 L885 737 L880.8 726Z" fill="none" stroke="#86a87c" stroke-width="2.8"/>
</svg>
<div class="vtxt" style="left:745px;top:964px">L: mask (100%)<br>B: Volume</div>

<!-- GREEN bar -->
<div class="a" style="left:1331px;top:557px;width:589px;height:15px;background:linear-gradient(#92ec66 0%,#64a048 28%,#6aaa4c 42%,#74ba54 65%,#70b450 85%,#68a64a 100%)"></div>
<div class="a" style="left:1348px;top:557px;width:16px;height:15px;background:#8fe466"></div>
<div class="t" style="left:1351px;top:558px;font-size:12px;letter-spacing:0">G</div><svg class="a" style="left:1331px;top:557px" width="50" height="15" viewBox="0 0 50 15">
 <path d="M3 7.4H6" stroke="#555" stroke-width="0.8"/><rect x="5.8" y="5.6" width="1.6" height="3.8" rx="0.6" fill="#3c4a50"/><rect x="7" y="6.6" width="3.6" height="1.8" fill="#3c4a50"/><rect x="10.2" y="5.3" width="1.8" height="4.4" rx="0.7" fill="#3c4a50"/>
 <rect x="38" y="3" width="9" height="9" fill="#000" opacity="0.18"/>
 <rect x="38" y="3" width="4.5" height="4.5" fill="#fff" opacity="0.22"/>
 <rect x="42.5" y="3" width="4.5" height="4.5" fill="#000" opacity="0.3"/>
 <rect x="38" y="7.5" width="4.5" height="4.5" fill="#000" opacity="0.12"/>
 <rect x="42.5" y="7.5" width="4.5" height="4.5" fill="#000" opacity="0.62"/>
 <circle cx="40" cy="5" r="1" fill="#fff" opacity="0.5"/>
 <circle cx="42.5" cy="1.5" r="0.7" fill="#111"/><circle cx="42.5" cy="13.6" r="0.7" fill="#111"/><circle cx="36.5" cy="7.4" r="0.7" fill="#111"/><circle cx="48.4" cy="7.4" r="0.7" fill="#111"/>
</svg>
<div class="a" style="left:1389px;top:562px;width:424px;height:5px;border:1px solid #000;border-radius:3px;background:linear-gradient(90deg,#45aaea 0,#45aaea 208px,#eee 208px)"></div>
<div class="a" style="left:1596px;top:558px;width:10px;height:13px;border:1px solid #000;border-radius:3px;background:#fff"></div>
<div class="a" style="left:1817px;top:557px;width:103px;height:15px;background:#8fe466"></div>
<div class="t" style="left:1819px;top:558px;font-size:11px;letter-spacing:0;line-height:13px;color:#111">A: 0.694mm</div>
<div class="a" style="left:1347px;top:626px;width:558px;height:336px;background:#f00"></div>
<svg class="a" style="left:1460px;top:695px" width="340" height="195" viewBox="1460 695 340 195">
 <defs><clipPath id="c3"><path d="M1485.5 705.4 L1777 705.4 L1781.5 728.5 L1786 745 L1787 769 L1783.4 791.3 L1782.5 821 L1779.7 858 L1778 876 L1481 876 L1480 843 L1476.2 806 L1473.5 769 L1473.5 743 L1479 726.5Z"/></clipPath>
 <filter id="bl5" x="-20%" y="-20%" width="140%" height="140%"><feGaussianBlur stdDeviation="1.4"/></filter>
 <filter id="bl6" x="-10%" y="-10%" width="120%" height="120%"><feTurbulence type="fractalNoise" baseFrequency="0.12" numOctaves="2" seed="7" result="w"/><feDisplacementMap in="SourceGraphic" in2="w" scale="5" xChannelSelector="R" yChannelSelector="G" result="dm"/><feGaussianBlur in="dm" stdDeviation="0.6"/></filter></defs>
 <path d="M1485.5 705.4 L1777 705.4 L1781.5 728.5 L1786 745 L1787 769 L1783.4 791.3 L1782.5 821 L1779.7 858 L1778 876 L1481 876 L1480 843 L1476.2 806 L1473.5 769 L1473.5 743 L1479 726.5Z" fill="#3a18ee"/>
 <g clip-path="url(#c3)">
  <rect x="1460" y="695" width="340" height="195" filter="url(#tx)"/>
  <g filter="url(#bl5)">
   <path d="M1545 740 Q1560 775 1568 800 Q1575 830 1590 870" stroke="#c040f0" stroke-width="4" fill="none" opacity="0.6"/>
   <path d="M1560 780 Q1568 800 1565 815" stroke="#e040f0" stroke-width="7" fill="none" opacity="0.7"/>
   <path d="M1712 730 Q1700 760 1690 790 Q1680 820 1675 860" stroke="#c040f0" stroke-width="3" fill="none" opacity="0.6"/>
   <path d="M1598 745 Q1580 790 1610 830 Q1640 860 1665 830 Q1685 790 1668 745" stroke="#8a30f0" stroke-width="3" fill="none" opacity="0.6"/>
   <path d="M1655 800 Q1648 830 1630 845" stroke="#b040f0" stroke-width="3" fill="none" opacity="0.6"/>
   <ellipse cx="1505" cy="835" rx="5" ry="10" fill="#c040f0" opacity="0.7"/>
   <path d="M1490 720 V870 M1760 720 V870" stroke="#5030f0" stroke-width="3" opacity="0.5"/>
</g>
  <g filter="url(#bl6)">
   <path d="M1542 709 Q1552 740 1565 772 Q1578 810 1585 845 Q1590 865 1594 875" stroke="#10068a" stroke-width="4.2" fill="none" opacity="0.75" stroke-linecap="round"/><path d="M1542 709 Q1552 740 1565 772 Q1578 810 1585 845 Q1590 865 1594 875" stroke="#44d4f4" stroke-width="1.6" fill="none" stroke-linecap="round"/><path d="M1542 709 Q1552 740 1565 772 Q1578 810 1585 845 Q1590 865 1594 875" stroke="#44d4f4" stroke-width="2.8" fill="none" stroke-dasharray="4 3 7 5 2 4" opacity="0.75"/><path d="M1580 712 Q1570 745 1565 772 Q1556 795 1557 815 Q1562 845 1578 876" stroke="#10068a" stroke-width="3.9000000000000004" fill="none" opacity="0.75" stroke-linecap="round"/><path d="M1580 712 Q1570 745 1565 772 Q1556 795 1557 815 Q1562 845 1578 876" stroke="#3ab8f0" stroke-width="1.3" fill="none" stroke-linecap="round"/><path d="M1580 712 Q1570 745 1565 772 Q1556 795 1557 815 Q1562 845 1578 876" stroke="#3ab8f0" stroke-width="2.5" fill="none" stroke-dasharray="4 3 7 5 2 4" opacity="0.75"/><path d="M1720 708 Q1708 745 1695 773 Q1686 800 1684 815 Q1678 845 1672 872" stroke="#10068a" stroke-width="4.2" fill="none" opacity="0.75" stroke-linecap="round"/><path d="M1720 708 Q1708 745 1695 773 Q1686 800 1684 815 Q1678 845 1672 872" stroke="#44d4f4" stroke-width="1.6" fill="none" stroke-linecap="round"/><path d="M1720 708 Q1708 745 1695 773 Q1686 800 1684 815 Q1678 845 1672 872" stroke="#44d4f4" stroke-width="2.8" fill="none" stroke-dasharray="4 3 7 5 2 4" opacity="0.75"/><path d="M1685 712 Q1690 745 1695 773 Q1712 800 1712 815 Q1705 840 1688 872" stroke="#10068a" stroke-width="3.9000000000000004" fill="none" opacity="0.75" stroke-linecap="round"/><path d="M1685 712 Q1690 745 1695 773 Q1712 800 1712 815 Q1705 840 1688 872" stroke="#3ab8f0" stroke-width="1.3" fill="none" stroke-linecap="round"/><path d="M1685 712 Q1690 745 1695 773 Q1712 800 1712 815 Q1705 840 1688 872" stroke="#3ab8f0" stroke-width="2.5" fill="none" stroke-dasharray="4 3 7 5 2 4" opacity="0.75"/><path d="M1535 800 Q1540 790 1545 780" stroke="#10068a" stroke-width="5.800000000000001" fill="none" opacity="0.75" stroke-linecap="round"/><path d="M1535 800 Q1540 790 1545 780" stroke="#40b8f8" stroke-width="3.2" fill="none" stroke-linecap="round"/><path d="M1535 800 Q1540 790 1545 780" stroke="#40b8f8" stroke-width="4.4" fill="none" stroke-dasharray="4 3 7 5 2 4" opacity="0.75"/><path d="M1496 772 V800" stroke="#10068a" stroke-width="4.4" fill="none" opacity="0.75" stroke-linecap="round"/><path d="M1496 772 V800" stroke="#38a8f0" stroke-width="1.8" fill="none" stroke-linecap="round"/><path d="M1496 772 V800" stroke="#38a8f0" stroke-width="3.0" fill="none" stroke-dasharray="4 3 7 5 2 4" opacity="0.75"/><path d="M1590 718 Q1605 708 1620 712" stroke="#10068a" stroke-width="5.2" fill="none" opacity="0.75" stroke-linecap="round"/><path d="M1590 718 Q1605 708 1620 712" stroke="#48d8f4" stroke-width="2.6" fill="none" stroke-linecap="round"/><path d="M1590 718 Q1605 708 1620 712" stroke="#48d8f4" stroke-width="3.8" fill="none" stroke-dasharray="4 3 7 5 2 4" opacity="0.75"/><path d="M1690 729 Q1705 735 1718 712" stroke="#10068a" stroke-width="4.800000000000001" fill="none" opacity="0.75" stroke-linecap="round"/><path d="M1690 729 Q1705 735 1718 712" stroke="#48e0f0" stroke-width="2.2" fill="none" stroke-linecap="round"/><path d="M1690 729 Q1705 735 1718 712" stroke="#48e0f0" stroke-width="3.4" fill="none" stroke-dasharray="4 3 7 5 2 4" opacity="0.75"/><ellipse cx="1512.5" cy="835" rx="6" ry="9" fill="none" stroke="#10068a" stroke-width="4" opacity="0.7"/><ellipse cx="1512.5" cy="835" rx="6" ry="9" fill="none" stroke="#40b0f0" stroke-width="1.3"/><ellipse cx="1748" cy="821" rx="7" ry="9" fill="none" stroke="#10068a" stroke-width="4" opacity="0.7"/><ellipse cx="1748" cy="821" rx="7" ry="9" fill="none" stroke="#40c8f0" stroke-width="1.4"/><ellipse cx="1746" cy="846" rx="7" ry="6" fill="none" stroke="#10068a" stroke-width="4" opacity="0.7"/><ellipse cx="1746" cy="846" rx="7" ry="6" fill="none" stroke="#48e0f0" stroke-width="1.5"/><circle cx="1545" cy="722" r="2.5" fill="#60f0f0"/><circle cx="1574" cy="868" r="2.5" fill="#60f0f0"/><circle cx="1686" cy="868" r="2" fill="#50e0f0"/><ellipse cx="1634" cy="758" rx="5" ry="7" fill="none" stroke="#3080f0" stroke-width="1.4"/><path d="M1648 835 L1652 852" stroke="#30b0f0" stroke-width="3"/>
  </g>
 </g>
 <path d="M1485.5 705.4 L1777 705.4 L1781.5 728.5 L1786 745 L1787 769 L1783.4 791.3 L1782.5 821 L1779.7 858 L1778 876 L1481 876 L1480 843 L1476.2 806 L1473.5 769 L1473.5 743 L1479 726.5Z" fill="none" stroke="#a8d860" stroke-width="4.2" opacity="0.8"/>
 <path d="M1485.5 705.4 L1777 705.4 L1781.5 728.5 L1786 745 L1787 769 L1783.4 791.3 L1782.5 821 L1779.7 858 L1778 876 L1481 876 L1480 843 L1476.2 806 L1473.5 769 L1473.5 743 L1479 726.5Z" fill="none" stroke="#86a87c" stroke-width="2.8"/>
</svg>
<div class="vtxt" style="left:1336px;top:964px">L: mask (100%)<br>B: Volume</div>

<!-- error button -->
<div class="a" style="left:1887px;top:1020px;width:32px;height:31px;border:1px solid #b8b8b8;border-radius:4px;background:linear-gradient(#fefefe,#f6f6f6)"></div>
<svg class="a" style="left:1890px;top:1022px" width="26" height="26" viewBox="0 0 26 26">
 <circle cx="13.5" cy="13.5" r="11" fill="#9ab" opacity="0.6"/>
 <circle cx="12.5" cy="12.5" r="11" fill="#f00"/>
 <path d="M8 8L17 17M17 8L8 17" stroke="#fff" stroke-width="2.6"/>
</svg>
</div>

</body></html>
